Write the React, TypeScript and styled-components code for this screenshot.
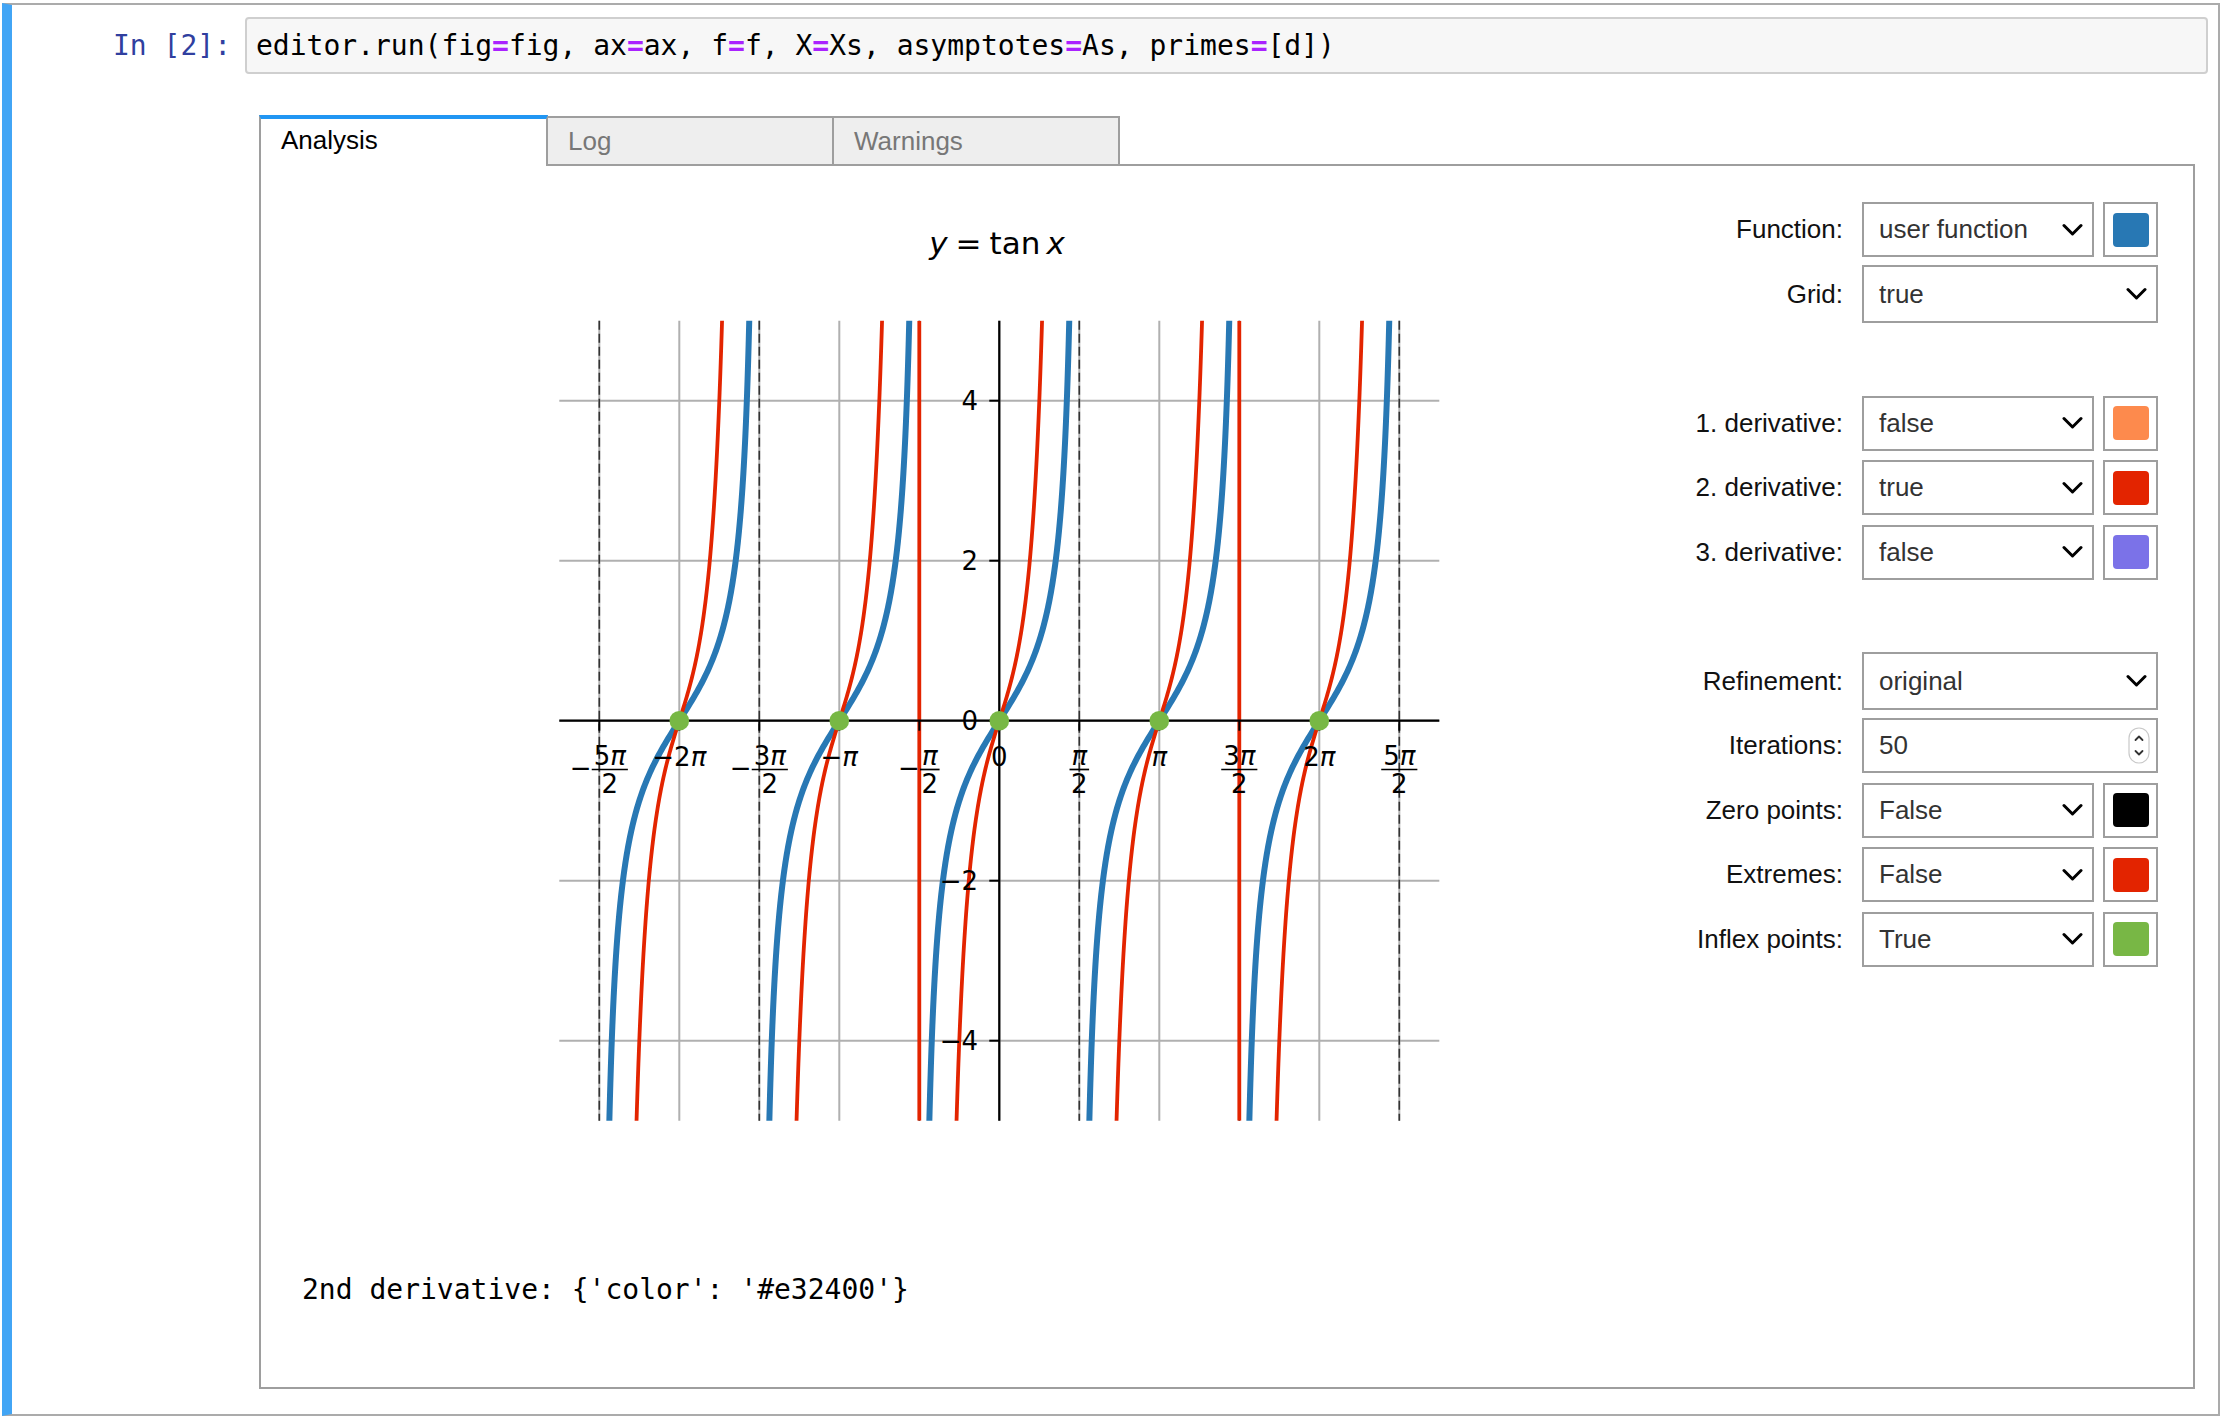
import React, { useMemo } from "react";
import styled, { createGlobalStyle } from "styled-components";

const GlobalStyle = createGlobalStyle`
  html, body { margin: 0; padding: 0; background: #fff; }
  body { font-family: "Liberation Sans", Arial, sans-serif; }
  * { box-sizing: border-box; }
`;

const Cell = styled.div`
  margin: 3px 2px 0 2px;
  height: 1413px;
  border: 2px solid #ababab;
  border-left: 10px solid #42a5f5;
  display: flex;
  flex-direction: column;
  background: #fff;
`;

const InputRow = styled.div`
  display: flex;
  align-items: center;
  padding: 12px 10px 0 0;
  flex: none;
`;

const Prompt = styled.div`
  width: 233px;
  flex: none;
  padding-right: 14px;
  text-align: right;
  font: 28px "DejaVu Sans Mono", monospace;
  color: #303f9f;
`;

const InputArea = styled.div`
  flex: 1;
  height: 57px;
  border: 2px solid #cfcfcf;
  border-radius: 4px;
  background: #f7f7f7;
  padding-left: 9px;
  display: flex;
  align-items: center;
  font: 28px "DejaVu Sans Mono", monospace;
  color: #000;
  white-space: pre;
`;

const Op = styled.span`
  color: #aa22ff;
  font-weight: bold;
`;

const OutputArea = styled.div`
  flex: 1;
  display: flex;
  flex-direction: column;
  padding: 41px 23px 25px 247px;
  min-height: 0;
`;

const TabBar = styled.div`
  display: flex;
  align-items: flex-end;
  height: 51px;
  flex: none;
`;

const Tab = styled.div<{ $active?: boolean; $first?: boolean }>`
  width: ${(p) => (p.$first ? 289 : 288)}px;
  margin-left: ${(p) => (p.$first ? 0 : -2)}px;
  height: ${(p) => (p.$active ? 51 : 50)}px;
  border: 2px solid #9e9e9e;
  border-top: ${(p) => (p.$active ? "4px solid #2196f3" : "2px solid #9e9e9e")};
  border-bottom: ${(p) => (p.$active ? "none" : "2px solid #9e9e9e")};
  background: ${(p) => (p.$active ? "#fff" : "#eeeeee")};
  color: ${(p) => (p.$active ? "#000" : "#777")};
  padding-left: 20px;
  padding-bottom: ${(p) => (p.$active ? 4 : 0)}px;
  display: flex;
  align-items: center;
  font-size: 26px;
  position: relative;
  z-index: ${(p) => (p.$active ? 2 : 0)};
`;

const Panel = styled.div`
  flex: 1;
  margin-top: -2px;
  border: 2px solid #9e9e9e;
  display: flex;
  min-height: 0;
`;

const LeftColumn = styled.div`
  flex: 1;
  display: flex;
  flex-direction: column;
  padding: 24px 0 0 41px;
`;

const ChartSvg = styled.svg`
  display: block;
  flex: none;
`;

const OutputText = styled.div`
  margin-top: 133px;
  font: 28px "DejaVu Sans Mono", monospace;
  line-height: 34px;
  white-space: pre;
  color: #000;
`;

const Controls = styled.div`
  flex: none;
  width: 515px;
  margin-right: 35px;
  padding-top: 36px;
  display: flex;
  flex-direction: column;
  gap: 9.5px;
`;

const Row = styled.div`
  display: flex;
  align-items: center;
  height: 55px;
`;

const Label = styled.div`
  width: 200px;
  margin-right: 19px;
  text-align: right;
  font-size: 26px;
  color: #111;
  white-space: nowrap;
`;

const ControlGroup = styled.div`
  display: flex;
  align-items: center;
  gap: 9px;
`;

const SelectBox = styled.div<{ $w: number; $h: number }>`
  width: ${(p) => p.$w}px;
  height: ${(p) => p.$h}px;
  border: 2px solid #9e9e9e;
  background: #fff;
  display: flex;
  align-items: center;
  justify-content: space-between;
  padding: 0 9px 0 15px;
  font-size: 26px;
  color: #333;
  flex: none;
`;

const NumberBox = styled(SelectBox)`
  padding-right: 6px;
`;

const ColorBox = styled.div`
  width: 55px;
  height: 55px;
  border: 2px solid #9e9e9e;
  background: #fff;
  display: flex;
  align-items: center;
  justify-content: center;
  flex: none;
`;

const Swatch = styled.div<{ $c: string }>`
  width: 36px;
  height: 34px;
  border-radius: 4px;
  background: ${(p) => p.$c};
`;

const Chevron = () => (
  <svg width="21" height="14" viewBox="0 0 21 14">
    <path d="M2 2.5 L10.5 11 L19 2.5" fill="none" stroke="#000" strokeWidth="3" strokeLinecap="round" strokeLinejoin="round" />
  </svg>
);

const Spinner = () => (
  <svg width="22" height="37" viewBox="0 0 22 37">
    <rect x="1" y="1" width="20" height="35" rx="10" fill="#fff" stroke="#c9c9c9" strokeWidth="1.2" />
    <path d="M7.5 13 L11 9.5 L14.5 13" fill="none" stroke="#333" strokeWidth="1.8" strokeLinecap="round" strokeLinejoin="round" />
    <path d="M7.5 24 L11 27.5 L14.5 24" fill="none" stroke="#333" strokeWidth="1.8" strokeLinecap="round" strokeLinejoin="round" />
  </svg>
);

/* ---------- chart ---------- */
const PI = Math.PI;
const CX = 999.3;
const CY = 720.7;
const SX = 160 / PI;
const SY = 80;
const X0 = CX - ((11 * PI) / 4) * SX;
const X1 = CX + ((11 * PI) / 4) * SX;
const Y0 = CY - 5 * SY;
const Y1 = CY + 5 * SY;
const px = (x: number) => CX + x * SX;
const py = (y: number) => CY - y * SY;

function curvePath(k: number, fn: (t: number) => number, tMax: number) {
  const n = 320;
  let d = "";
  for (let i = 0; i <= n; i++) {
    const t = -tMax + (2 * tMax * i) / n;
    const x = k * PI + Math.atan(t);
    const y = fn(t);
    d += (i ? "L" : "M") + px(x).toFixed(2) + " " + py(y).toFixed(2);
  }
  return d;
}

const GRID = "#b0b0b0";
const BLUE = "#2878b4";
const RED = "#e32400";
const GREEN = "#78b845";

type XLabel = { k: number; minus?: boolean; num?: string; text?: string };
const xLabels: XLabel[] = [
  { k: -5, minus: true, num: "5" },
  { k: -4, text: "−2" },
  { k: -3, minus: true, num: "3" },
  { k: -2, text: "−" },
  { k: -1, minus: true, num: "" },
  { k: 0, text: "0" },
  { k: 1, num: "" },
  { k: 2, text: "" },
  { k: 3, num: "3" },
  { k: 4, text: "2" },
  { k: 5, num: "5" },
];

const FS = 26;
const DIGIT_W = 0.636 * FS;
const PI_W = 0.6 * FS;
const MINUS_W = 21;

function XTickLabel({ l }: { l: XLabel }) {
  const tx = px((l.k * PI) / 2);
  if (l.text !== undefined) {
    const zero = l.k === 0;
    return (
      <text x={tx} y={765.5} textAnchor="middle" fontSize={FS}>
        {l.text}
        {!zero && <tspan fontStyle="italic">π</tspan>}
      </text>
    );
  }
  const numW = (l.num ? l.num.length * DIGIT_W : 0) + PI_W;
  const fracW = numW + 4;
  const total = (l.minus ? MINUS_W : 0) + fracW;
  const start = tx - total / 2;
  const fc = start + (l.minus ? MINUS_W : 0) + fracW / 2;
  return (
    <g>
      {l.minus && (
        <text x={start - 1} y={777} fontSize={FS}>
          −
        </text>
      )}
      <text x={fc} y={765} textAnchor="middle" fontSize={FS}>
        {l.num}
        <tspan fontStyle="italic">π</tspan>
      </text>
      <line x1={fc - fracW / 2} x2={fc + fracW / 2} y1={769.5} y2={769.5} stroke="#000" strokeWidth={1.7} />
      <text x={fc} y={793} textAnchor="middle" fontSize={FS}>
        2
      </text>
    </g>
  );
}

function Chart() {
  const { blue, red } = useMemo(() => {
    const ks = [-2, -1, 0, 1, 2];
    return {
      blue: ks.map((k) => curvePath(k, (t) => t, 5.8)),
      red: ks.map((k) => curvePath(k, (t) => 2 * t * (1 + t * t), 1.2)),
    };
  }, []);
  const xt = Array.from({ length: 11 }, (_, i) => i - 5);
  const yt = [-4, -2, 0, 2, 4];
  return (
    <ChartSvg width={1258} height={950} viewBox="302 190 1258 950" fontFamily="'DejaVu Sans', sans-serif">
      <defs>
        <clipPath id="axesClip">
          <rect x={X0} y={Y0} width={X1 - X0} height={Y1 - Y0} />
        </clipPath>
      </defs>
      <text x={997} y={254} textAnchor="middle" fontSize={31}>
        <tspan fontStyle="italic">y</tspan>
        <tspan dx={8}>=</tspan>
        <tspan dx={8}>tan</tspan>
        <tspan dx={6} fontStyle="italic">x</tspan>
      </text>
      {xt.map((k) => (
        <line key={"gx" + k} x1={px((k * PI) / 2)} x2={px((k * PI) / 2)} y1={Y0} y2={Y1} stroke={GRID} strokeWidth={2} />
      ))}
      {yt.map((v) => (
        <line key={"gy" + v} x1={X0} x2={X1} y1={py(v)} y2={py(v)} stroke={GRID} strokeWidth={2} />
      ))}
      {[-5, -3, -1, 1, 3, 5].map((k) => (
        <line
          key={"as" + k}
          x1={px((k * PI) / 2)}
          x2={px((k * PI) / 2)}
          y1={Y0}
          y2={Y1}
          stroke="#333"
          strokeWidth={1.6}
          strokeDasharray="9 4"
        />
      ))}
      <g clipPath="url(#axesClip)" fill="none" strokeLinejoin="round">
        {blue.map((d, i) => (
          <path key={"b" + i} d={d} stroke={BLUE} strokeWidth={6} />
        ))}
        {red.map((d, i) => (
          <path key={"r" + i} d={d} stroke={RED} strokeWidth={3.8} />
        ))}
        {[-1, 3].map((k) => (
          <line key={"rv" + k} x1={px((k * PI) / 2)} x2={px((k * PI) / 2)} y1={Y0} y2={Y1} stroke={RED} strokeWidth={3.8} />
        ))}
      </g>
      <line x1={X0} x2={X1} y1={CY} y2={CY} stroke="#000" strokeWidth={2.2} />
      <line x1={CX} x2={CX} y1={Y0} y2={Y1} stroke="#000" strokeWidth={2.2} />
      {xt.map((k) => (
        <line key={"tx" + k} x1={px((k * PI) / 2)} x2={px((k * PI) / 2)} y1={CY} y2={CY + 10} stroke="#000" strokeWidth={2} />
      ))}
      {yt.map((v) => (
        <line key={"ty" + v} x1={CX - 10} x2={CX} y1={py(v)} y2={py(v)} stroke="#000" strokeWidth={2} />
      ))}
      {[-2, -1, 0, 1, 2].map((k) => (
        <circle key={"d" + k} cx={px(k * PI)} cy={CY} r={9.8} fill={GREEN} />
      ))}
      {yt.map((v) => (
        <text key={"yl" + v} x={978} y={py(v) + 9.5} textAnchor="end" fontSize={FS}>
          {v < 0 ? "−" + Math.abs(v) : String(v)}
        </text>
      ))}
      {xLabels.map((l) => (
        <XTickLabel key={"xl" + l.k} l={l} />
      ))}
    </ChartSvg>
  );
}

/* ---------- controls ---------- */
type Ctl =
  | { spacer: true }
  | { spacer?: false; label: string; value: string; color?: string; wide?: boolean; number?: boolean };

const controls: Ctl[] = [
  { label: "Function:", value: "user function", color: "#2878b4" },
  { label: "Grid:", value: "true", wide: true },
  { spacer: true },
  { label: "1. derivative:", value: "false", color: "#fd8a4d" },
  { label: "2. derivative:", value: "true", color: "#e32400" },
  { label: "3. derivative:", value: "false", color: "#7b72e8" },
  { spacer: true },
  { label: "Refinement:", value: "original", wide: true },
  { label: "Iterations:", value: "50", number: true },
  { label: "Zero points:", value: "False", color: "#000000" },
  { label: "Extremes:", value: "False", color: "#e32400" },
  { label: "Inflex points:", value: "True", color: "#78b745" },
];

function ControlRow({ c }: { c: Ctl }) {
  if (c.spacer) return <Row />;
  return (
    <Row>
      <Label>{c.label}</Label>
      <ControlGroup>
        {c.number ? (
          <NumberBox $w={296} $h={55}>
            <span>{c.value}</span>
            <Spinner />
          </NumberBox>
        ) : (
          <SelectBox $w={c.wide ? 296 : 232} $h={c.wide ? 58 : 55}>
            <span>{c.value}</span>
            <Chevron />
          </SelectBox>
        )}
        {c.color && (
          <ColorBox>
            <Swatch $c={c.color} />
          </ColorBox>
        )}
      </ControlGroup>
    </Row>
  );
}

export default function App() {
  return (
    <>
      <GlobalStyle />
      <Cell>
        <InputRow>
          <Prompt>In [2]:</Prompt>
          <InputArea>
            editor.run(fig<Op>=</Op>fig, ax<Op>=</Op>ax, f<Op>=</Op>f, X<Op>=</Op>Xs, asymptotes<Op>=</Op>As, primes<Op>=</Op>[d])
          </InputArea>
        </InputRow>
        <OutputArea>
          <TabBar>
            <Tab $active $first>
              Analysis
            </Tab>
            <Tab>Log</Tab>
            <Tab>Warnings</Tab>
          </TabBar>
          <Panel>
            <LeftColumn>
              <Chart />
              <OutputText>2nd derivative: {"{'color': '#e32400'}"}</OutputText>
            </LeftColumn>
            <Controls>
              {controls.map((c, i) => (
                <ControlRow key={i} c={c} />
              ))}
            </Controls>
          </Panel>
        </OutputArea>
      </Cell>
    </>
  );
}
